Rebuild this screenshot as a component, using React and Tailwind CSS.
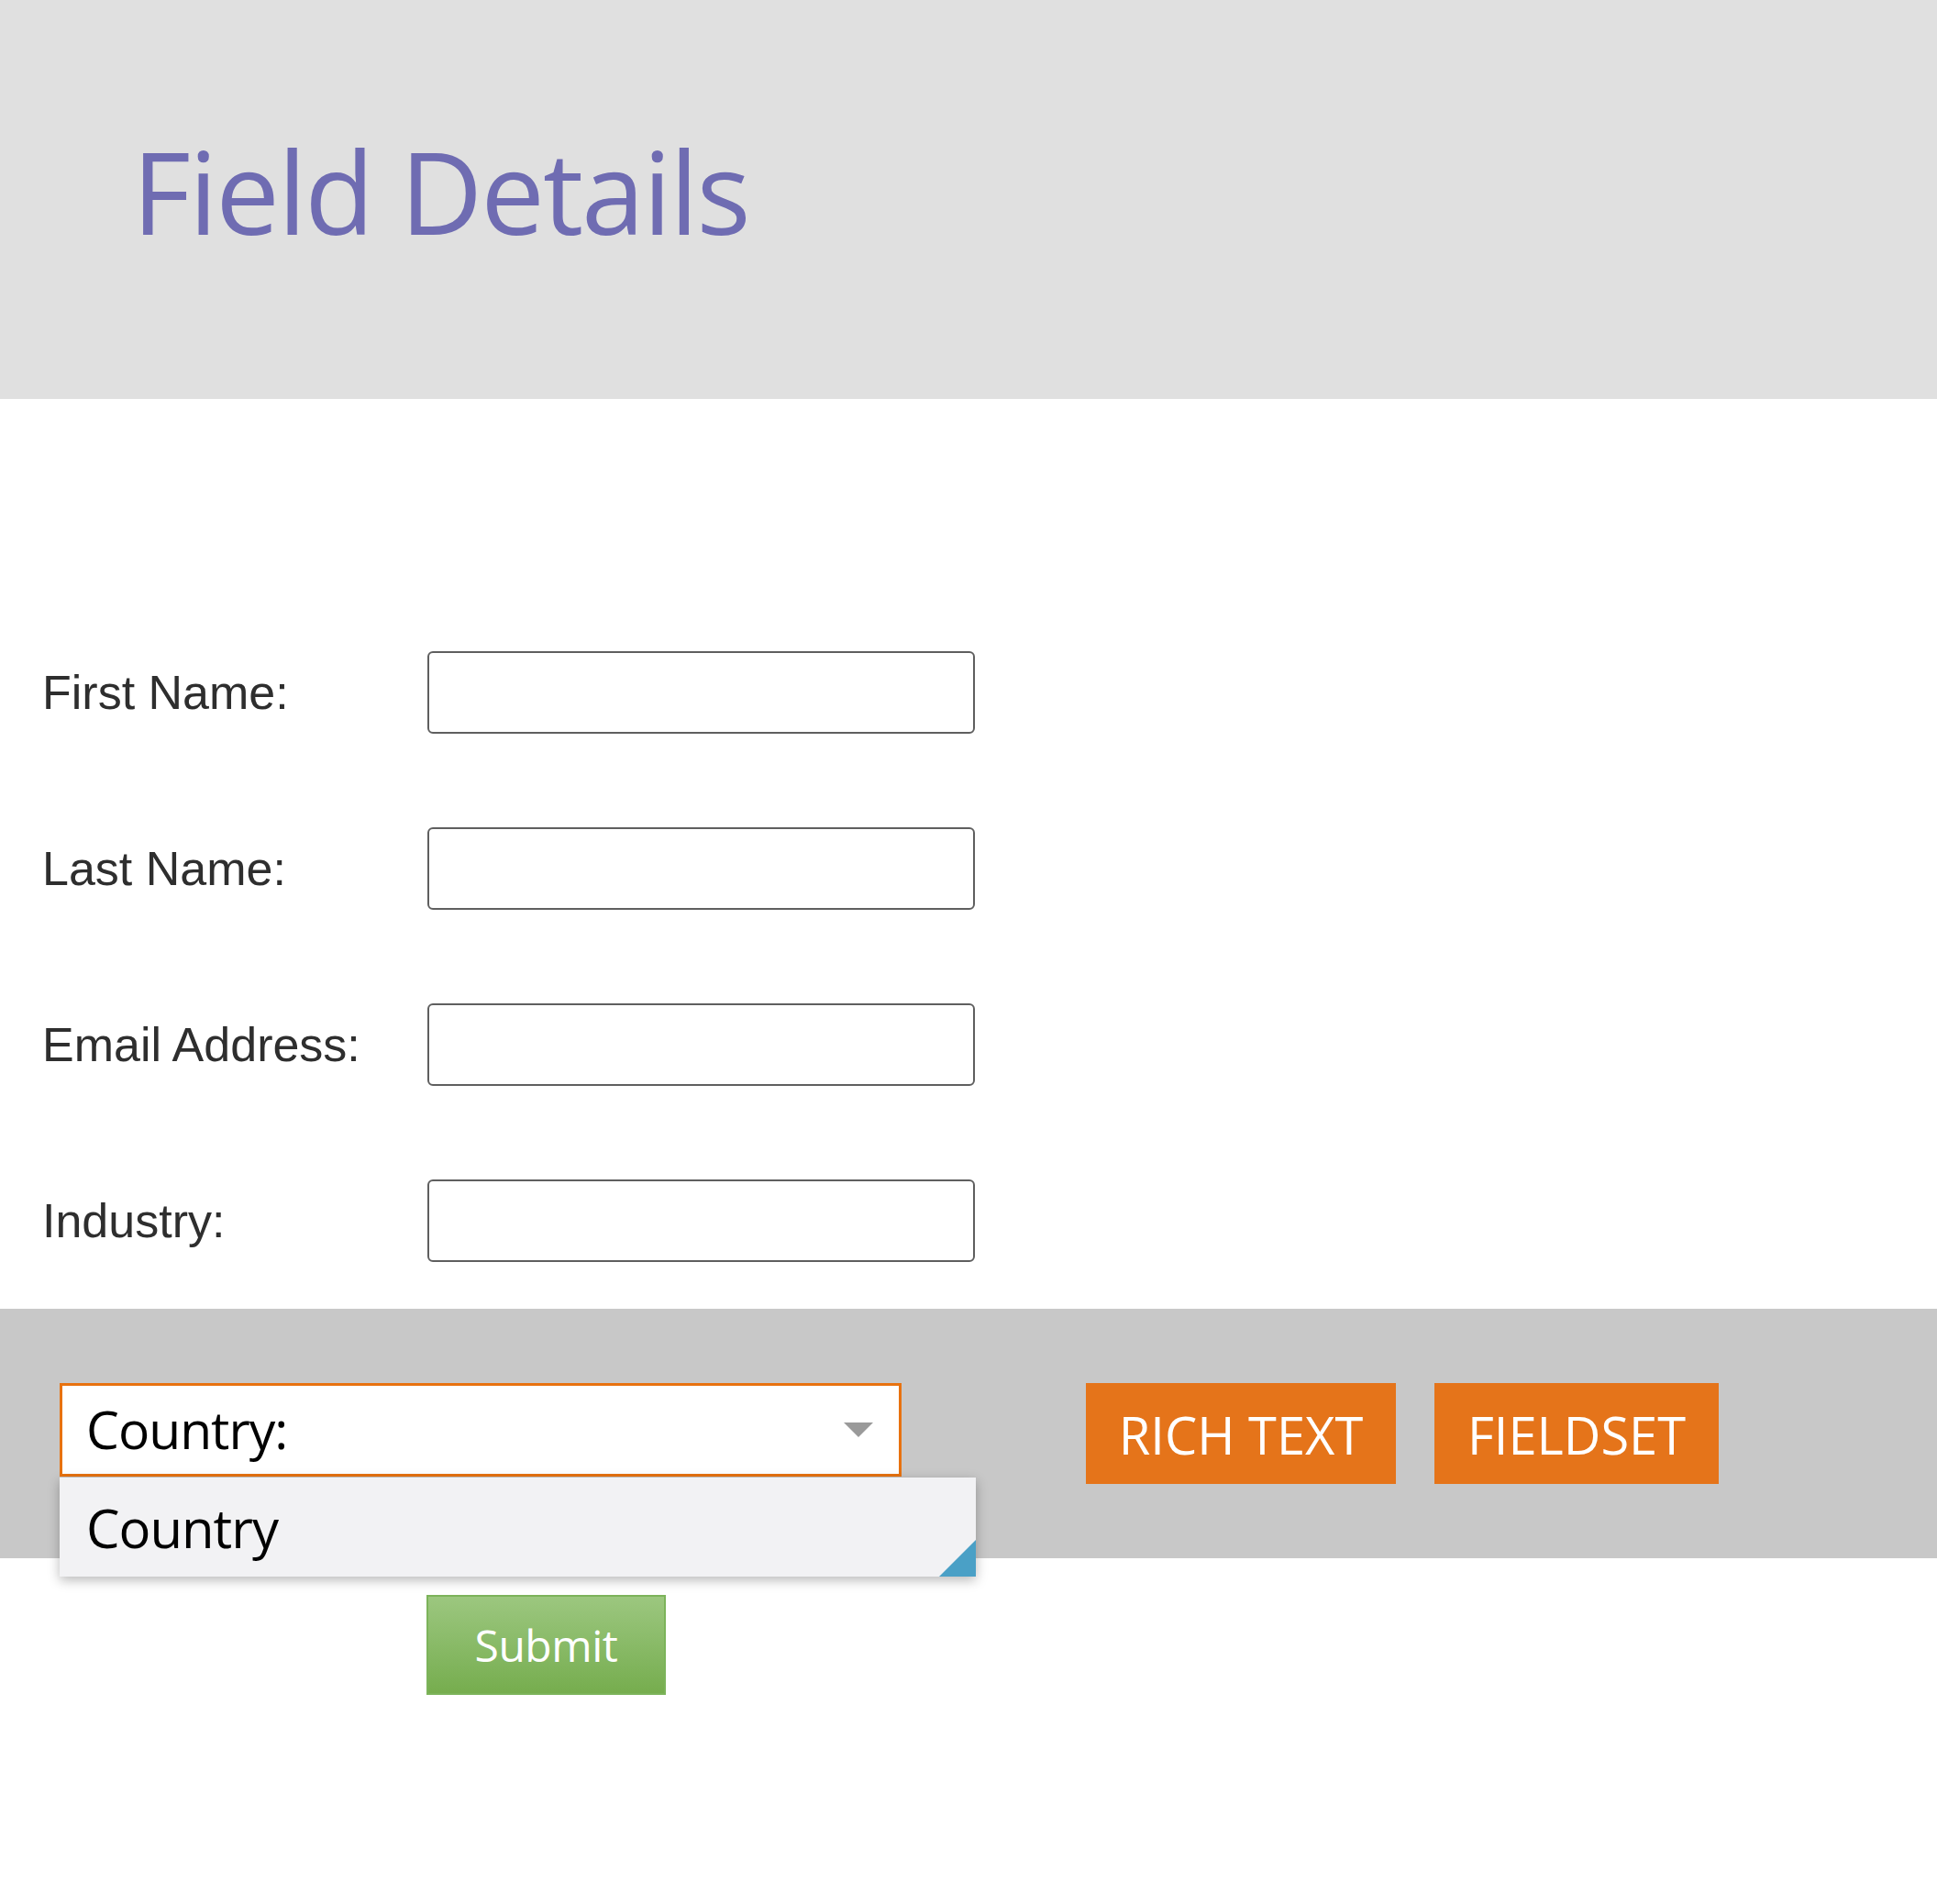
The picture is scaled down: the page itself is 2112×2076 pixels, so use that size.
import { useState } from 'react';

const FIELDS = ['First Name:', 'Last Name:', 'Email Address:', 'Industry:'];

export default function App() {
  const [values, setValues] = useState({});

  return (
    <div className="min-h-[2076px] bg-white font-['Open_Sans',sans-serif]">

      {/* ── Header ── */}
      <div className="h-[435px] bg-[#e0e0e0] pl-[144px] pt-[146px]">
        <h1 className="text-[124px] leading-none tracking-[-2px] text-[#6f6cb2] font-normal">
          Field Details
        </h1>
      </div>

      {/* ── Form rows ── */}
      <div className="pt-[275px] pl-[46px] flex flex-col gap-[102px]">
        {FIELDS.map(label => (
          <div key={label} className="flex items-center">
            <label className="w-[420px] text-[52px] text-[#2e2e2e] font-['Liberation_Sans',Arial,sans-serif]">
              {label}
            </label>
            <input
              value={values[label] || ''}
              onChange={e => setValues({ ...values, [label]: e.target.value })}
              className="w-[597px] h-[90px] border-2 border-[#5f5f5f] rounded-[6px] bg-white px-3 text-[40px] outline-none"
            />
          </div>
        ))}
      </div>

      {/* ── Gray toolbar band ── */}
      <div className="mt-[51px] h-[272px] bg-[#c8c8c8] pt-[81px] pl-[65px] flex items-start">
        <div className="relative">
          <div className="w-[918px] h-[102px] border-[3px] border-[#e8720f] bg-white flex items-center justify-between pl-[26px] pr-[28px]">
            <span className="text-[57px] text-black tracking-[-1px]">Country:</span>
            <svg width="32" height="16" viewBox="0 0 32 16">
              <path d="M0 0 L32 0 L16 16 Z" fill="#9a9a9a" />
            </svg>
          </div>

          {/* open dropdown list */}
          <div className="absolute left-0 top-[103px] w-[999px] h-[108px] bg-[#f2f2f4] shadow-[0_4px_12px_rgba(0,0,0,0.28)] flex items-center pl-[29px] z-10 overflow-hidden">
            <span className="text-[58px] text-black tracking-[-1px]">Country</span>
            <svg className="absolute right-0 bottom-0" width="40" height="40" viewBox="0 0 40 40">
              <path d="M40 0 L40 40 L0 40 Z" fill="#4aa0c6" />
            </svg>
          </div>
        </div>

        <div className="ml-[201px] flex gap-[42px]">
          <button className="w-[338px] h-[110px] bg-[#e5741a] text-white text-[56px] pt-[2px]">
            RICH TEXT
          </button>
          <button className="w-[310px] h-[110px] bg-[#e5741a] text-white text-[56px] pt-[2px]">
            FIELDSET
          </button>
        </div>
      </div>

      {/* ── Submit ── */}
      <div className="pt-[40px] pl-[465px]">
        <button className="w-[261px] h-[109px] border-2 border-[#7cb35a] bg-gradient-to-b from-[#9cc77f] to-[#76ad4e] text-white text-[48px] tracking-[-0.5px]">
          Submit
        </button>
      </div>
    </div>
  );
}
